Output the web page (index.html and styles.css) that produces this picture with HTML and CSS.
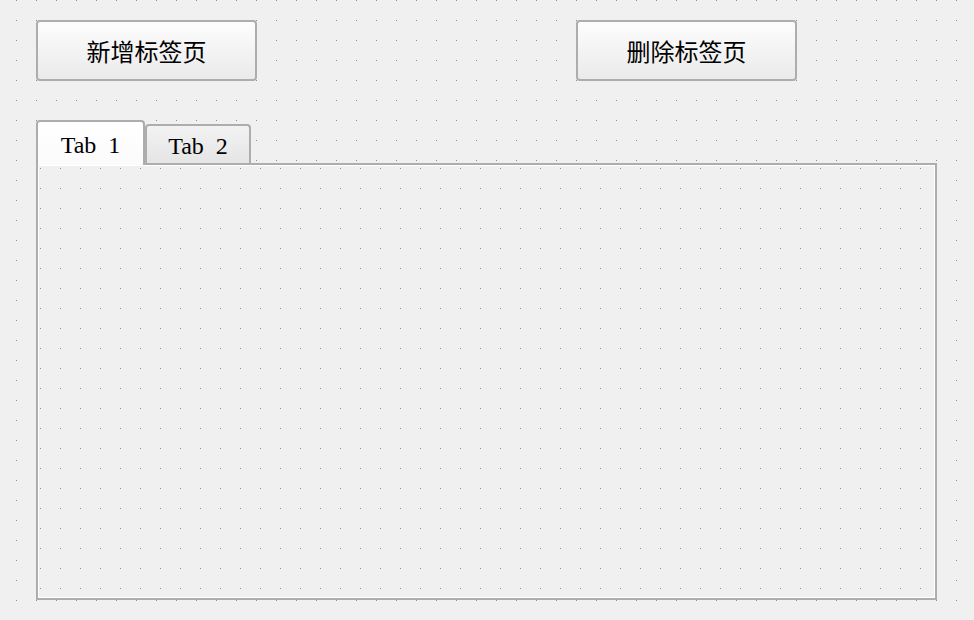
FILE: index.html
```html
<!DOCTYPE html>
<html lang="zh-CN">
<head>
  <meta charset="UTF-8">
  <meta name="viewport" content="width=device-width, initial-scale=1.0">
  <title>标签页</title>
  <link rel="stylesheet" href="styles.css">
</head>
<body>
  <div class="form">
    <div class="toolbar">
      <button class="btn">新增标签页</button>
      <button class="btn">删除标签页</button>
    </div>

    <div class="tabwidget">
      <div class="tabbar">
        <div class="tab active">Tab 1</div>
        <div class="tab">Tab 2</div>
      </div>
      <div class="pane"></div>
    </div>
  </div>
</body>
</html>
```
FILE: styles.css
```css
html {
  height: 100%;
  background-color: #f0f0f0;
  background-image: url("data:image/svg+xml,%3Csvg xmlns='http://www.w3.org/2000/svg' width='20' height='20' shape-rendering='crispEdges'%3E%3Crect width='1' height='1' fill='%23909090'/%3E%3C/svg%3E");
  background-size: 20px 20px;
  background-position: 16px 0;
}

body {
  margin: 0;
  font-family: "Noto Sans CJK SC", sans-serif;
  color: #000;
}

.form {
  padding: 20px 0 0 36px;
}

.toolbar {
  display: flex;
  gap: 319px;
}

.btn {
  width: 221px;
  height: 61px;
  padding: 0;
  border: 2px solid #adadad;
  border-radius: 4px;
  background: linear-gradient(#fdfdfd, #eaeaea);
  font-family: "Noto Sans CJK SC", sans-serif;
  font-size: 24px;
  line-height: 24px;
  color: #000;
}

.tabwidget {
  margin-top: 39px;
  width: 901px;
}

.tabbar {
  display: flex;
  align-items: flex-end;
  height: 43px;
}

.tab {
  box-sizing: border-box;
  border: 2px solid #adadad;
  border-bottom: 0;
  border-radius: 4px 4px 0 0;
  font-family: "Liberation Serif", serif;
  font-size: 24px;
  line-height: 24px;
  word-spacing: 6px;
  text-align: center;
  width: 106px;
  height: 39px;
  padding-top: 8px;
  background: linear-gradient(#f2f2f2, #e5e5e5);
}

.tab.active {
  position: relative;
  z-index: 1;
  width: 109px;
  height: 45px;
  padding-top: 11px;
  margin-bottom: -2px;
  background: linear-gradient(#ffffff, #fbfbfb);
}

.pane {
  box-sizing: border-box;
  height: 437px;
  border: 2px solid #adadad;
  background-color: #f0f0f0;
  background-image: url("data:image/svg+xml,%3Csvg xmlns='http://www.w3.org/2000/svg' width='20' height='20' shape-rendering='crispEdges'%3E%3Crect width='1' height='1' fill='%23909090'/%3E%3C/svg%3E");
  background-size: 20px 20px;
  background-position: 2px 3px;
  box-shadow: inset 0 0 0 1px #fff;
}
```
